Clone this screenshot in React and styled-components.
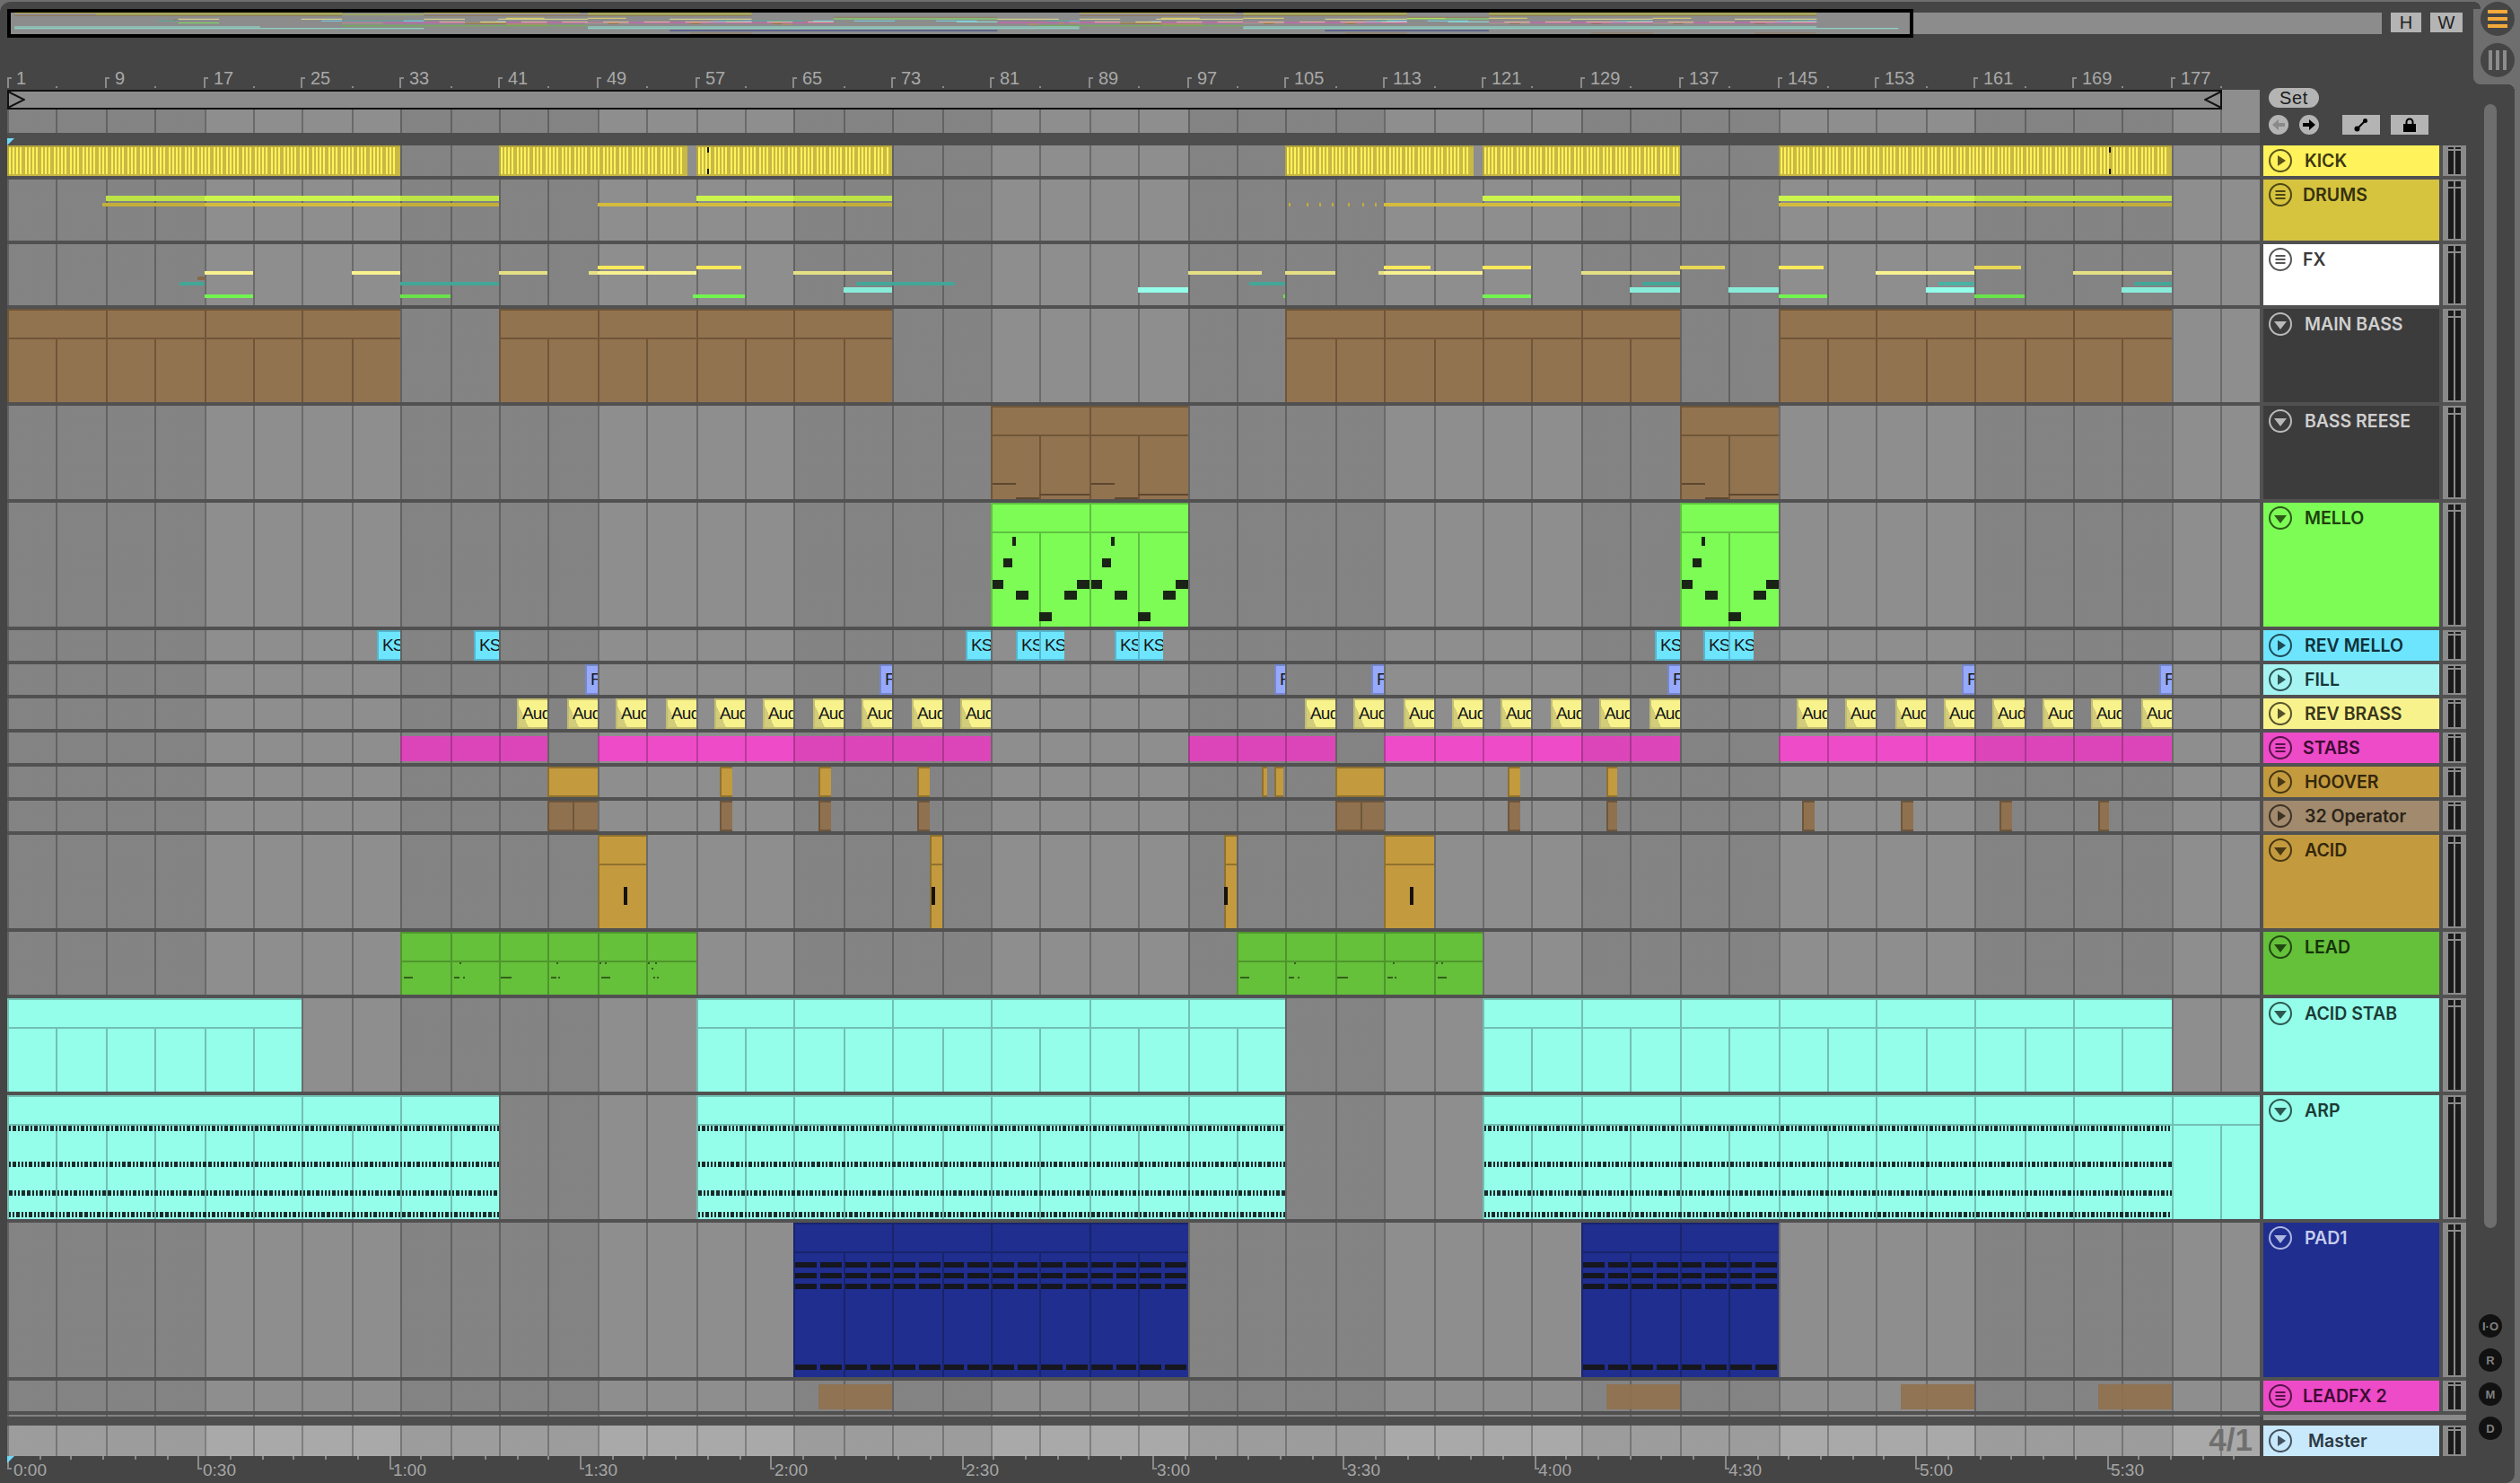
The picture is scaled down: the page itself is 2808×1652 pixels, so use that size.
import React from "react";
import styled, { createGlobalStyle } from "styled-components";

// timeline helpers: everything in the arrangement snaps to even pixels
const X = (bar) => Math.floor((9 + (bar - 1) * 13.7015) / 2) * 2;
const L = (bar) => X(bar) - 8;
const range = (from, to, step = 1) => {
  const out = [];
  for (let v = from; v < to; v += step) out.push(v);
  return out;
};

const gridBackground = (base, line) => {
  const stops = range(1, 186, 4).flatMap((b) => {
    const p = L(b);
    return [`${base} ${p}px`, `${line} ${p}px`, `${line} ${p + 2}px`, `${base} ${p + 2}px`];
  });
  return `linear-gradient(to right, ${stops.join(",")})`;
};
const shadeBackground = () => {
  const stops = range(1, 186, 16).flatMap((b) => {
    const c = (b - 1) % 32 === 0 ? "rgba(0,0,0,.075)" : "transparent";
    return [`${c} ${L(b)}px`, `${c} ${L(b + 16)}px`];
  });
  return `linear-gradient(to right, ${stops.join(",")})`;
};
const LANE = gridBackground("#8e8e8e", "#6a6a6a");
const MASTER_LANE = gridBackground("#a9a9a9", "#7f7f7f");
const SHADE = shadeBackground();

const rect = (x, y, w, h) => `M${x} ${y}h${w}v${h}h${-w}z`;

// KICK stripes
const kickStripes = (from, to) =>
  range(0, Math.floor((L(to) - L(from)) / 4.57))
    .map((i) => rect(L(from) + 2 + Math.floor((i * 4.57) / 2) * 2, 2, 2, 30))
    .join("");

const ARP_WIDTHS = [2, 4, 2, 2, 4, 2, 4, 2, 2, 2, 4, 2, 2, 4, 4, 2, 2, 4, 2];
const dashes = (from, to, y, seed) => {
  let x = L(from) + 2;
  const end = L(to);
  let i = seed;
  let d = "";
  while (x < end) {
    const w = Math.min(ARP_WIDTHS[i % ARP_WIDTHS.length], end - x);
    d += rect(x, y, w, 6);
    x += w + 2;
    i += 1;
  }
  return d;
};
const arpNotes = (from, to) =>
  [34, 74, 106, 130].map((y, i) => dashes(from, to, y, i * 5)).join("");

const padNotes = (from, to) =>
  range(from, to, 2)
    .flatMap((b) => [44, 56, 68, 158].map((y) => rect(L(b) + 2, y, L(b + 2) - L(b) - 4, 6)))
    .join("");

const MELLO_SHAPE = [
  [24, 38, 4], [14, 62, 10], [2, 86, 12], [28, 98, 14],
  [96, 86, 14], [82, 98, 14], [54, 122, 14],
];
const melloNotes = (from) =>
  MELLO_SHAPE.map(([x, y, w]) => rect(L(from) + x, y, w, 10)).join("");

const reeseNotes = (from) =>
  [[2, 86, 26], [28, 102, 26], [54, 98, 56]].map(([x, y, w]) => rect(L(from) + x, y, w, 2)).join("");

const LEAD_SHAPES = [
  [[4, 50, 10]],
  [[4, 50, 6], [14, 50, 2], [10, 34, 2]],
  [[2, 50, 12]],
  [[4, 50, 6], [12, 50, 2], [10, 34, 2]],
  [[4, 50, 10], [2, 34, 2], [8, 34, 2]],
  [[2, 34, 2], [10, 34, 2], [6, 40, 2], [8, 50, 2], [12, 50, 2]],
];
const leadNotes = (from, count) =>
  range(0, count)
    .flatMap((i) => LEAD_SHAPES[i].map(([x, y, w]) => rect(L(from + i * 4) + x, y, w, 2)))
    .join("");

const brass = (start, count) => range(0, count).map((k) => [start + 4 * k, start + 4 * k + 2.5]);

const FX_COLORS = { top: "#fbe95c", pale: "#f8f290", brown: "#92734f", teal: "#48b3a4", cyan: "#94feea", green: "#72f550" };
const FX_ROWS = { top: [24, 4], pale: [30, 4], brown: [36, 4], teal: [42, 4], cyan: [48, 6], green: [56, 4] };
const FX_NOTES = [
  ["pale", 17, 21], ["pale", 29, 33], ["pale", 41, 45], ["pale", 48.25, 57], ["pale", 65, 73], ["pale", 97, 103],
  ["pale", 105, 109], ["pale", 112.5, 121], ["pale", 129, 137], ["pale", 153, 161], ["pale", 169, 177],
  ["top", 49, 52.75], ["top", 57, 60.75], ["top", 113, 116.75], ["top", 121, 125], ["top", 137, 140.75], ["top", 145, 148.75], ["top", 161, 164.75],
  ["teal", 15, 17], ["teal", 33, 41], ["teal", 70, 78], ["teal", 102, 105], ["teal", 134, 137], ["teal", 158, 161], ["teal", 174, 177],
  ["cyan", 69, 73], ["cyan", 93, 97], ["cyan", 133, 137], ["cyan", 141, 145], ["cyan", 157, 161], ["cyan", 173, 177],
  ["green", 17, 21], ["green", 33, 37], ["green", 56.75, 61], ["green", 104.85, 105], ["green", 121, 125], ["green", 145, 149], ["green", 161, 165],
  ["brown", 16.5, 17],
];
const DRUM_NOTES = [
  ["#cbf54c", 18, 6, [[9, 41], [57, 73], [121, 137], [145, 177]]],
  ["#d4bc3c", 26, 4, [[8.75, 41], [49, 73], [113, 137], [145, 177]]],
];
const DRUM_DOTS = [105.2, 106.7, 107.7, 108.7, 110.1, 111.2, 112.2];

const KICK_CLIPS = [[1, 33], [41, 56.25], [57, 73], [105, 120.25], [121, 137], [145, 177]];

const TRACKS = [
  {
    name: "KICK", h: 34, color: "#fff25a", ink: "#3c3812", icon: "play",
    clipColor: "#c8b844", edge: "#b5a63e", frame: "tl",
    clips: KICK_CLIPS,
    notes: [
      { color: "#fff25a", d: KICK_CLIPS.map(([a, b]) => kickStripes(a, b)).join("") },
      { color: "#111", d: [58, 172].map((b) => rect(L(b), 2, 2, 6) + rect(L(b), 26, 2, 6)).join("") },
    ],
  },
  { name: "DRUMS", h: 68, color: "#d6c43f", ink: "#35300e", icon: "lines", clips: [], drums: true, shaded: true },
  { name: "FX", h: 68, color: "#ffffff", ink: "#3a3a3a", icon: "lines", clips: [], fx: true, shaded: true },
  {
    name: "MAIN BASS", h: 104, color: "#3c3c3c", ink: "#cfcfcf", icon: "down",
    clipColor: "#92734f", edge: "#6f5639", frame: "tl", header: true,
    clips: [[1, 33, 8], [41, 73, 8], [105, 137, 8], [145, 177, 8]],
  },
  {
    name: "BASS REESE", h: 104, color: "#3c3c3c", ink: "#cfcfcf", icon: "down",
    clipColor: "#92734f", edge: "#6f5639", frame: "tl", header: true,
    clips: [[81, 97, 8], [137, 145, 8]],
    notes: [{ color: "#5e4730", d: [81, 89, 137].map(reeseNotes).join("") }],
  },
  {
    name: "MELLO", h: 138, color: "#7cfc55", ink: "#20400f", icon: "down",
    clipColor: "#7cfc55", edge: "#5fc040", frame: "tl", header: true,
    clips: [[81, 97, 8], [137, 145, 8]],
    notes: [{ color: "#1a2416", d: [81, 89, 137].map(melloNotes).join("") }],
  },
  {
    name: "REV MELLO", h: 34, color: "#6ee5ff", ink: "#10303a", icon: "play",
    clipColor: "#6ee5ff", edge: "#55b5cc", frame: "tlb", label: "KS",
    clips: [[31, 33], [39, 41], [79, 81], [83, 85], [85, 87], [91, 93], [93, 95], [135, 137], [139, 141], [141, 143]],
  },
  {
    name: "FILL", h: 34, color: "#a6f4f2", ink: "#16383a", icon: "play",
    clipColor: "#97a9fb", edge: "#7688cc", frame: "tlb", label: "F",
    clips: [[48, 49], [72, 73], [104, 105], [112, 113], [136, 137], [160, 161], [176, 177]],
  },
  {
    name: "REV BRASS", h: 34, color: "#f8f28c", ink: "#38361a", icon: "play",
    clipColor: "linear-gradient(66deg, #d2cd7a 28%, #f8f28c 28%)", edge: "#c2bd70", frame: "tlb", label: "Audio",
    clips: [...brass(42.5, 10), ...brass(106.5, 8), ...brass(146.5, 8)],
  },
  {
    name: "STABS", h: 34, color: "#ee4bc8", ink: "#3d0a33", icon: "lines", shaded: true,
    clipColor: "#ee4bc8", edge: "#b93a9c", frame: "l", inset: true,
    clips: [[33, 45, 4], [49, 81, 4], [97, 109, 4], [113, 137, 4], [145, 177, 4]],
  },
  {
    name: "HOOVER", h: 34, color: "#c39a3e", ink: "#33270c", icon: "play",
    clipColor: "#c39a3e", edge: "#8f7130", frame: "tlb",
    clips: [[45, 49], [59, 60], [67, 68], [75, 76], [103, 103.5], [104, 104.75], [109, 113], [123, 124], [131, 132]],
  },
  {
    name: "32 Operator", h: 34, color: "#a18a6d", ink: "#2b2318", icon: "play",
    clipColor: "#8f7150", edge: "#6f5639", frame: "tlb",
    clips: [[45, 49, 2], [59, 60], [67, 68], [75, 76], [109, 113, 2], [123, 124], [131, 132], [147, 148], [155, 156], [163, 164], [171, 172]],
  },
  {
    name: "ACID", h: 104, color: "#c39a3e", ink: "#33270c", icon: "down",
    clipColor: "#c39a3e", edge: "#8f7130", frame: "tl", header: true,
    clips: [[49, 53], [76, 77], [100, 101], [113, 117]],
    notes: [{ color: "#15130c", d: [[49, 29], [76, 2], [100, 0], [113, 29]].map(([b, x]) => rect(L(b) + x, 58, 4, 20)).join("") }],
  },
  {
    name: "LEAD", h: 70, color: "#65c03a", ink: "#15330a", icon: "down",
    clipColor: "#65c03a", edge: "#4f962d", frame: "tl", header: true,
    clips: [[33, 57, 4], [101, 121, 4]],
    notes: [{ color: "#33601c", d: leadNotes(33, 6) + leadNotes(101, 5) }],
  },
  {
    name: "ACID STAB", h: 104, color: "#94feea", ink: "#1c3b36", icon: "down",
    clipColor: "#94feea", edge: "#72c0b2", frame: "tl", header: true,
    clips: [[1, 25, 24], [57, 105, 8], [121, 177, 8]],
  },
  {
    name: "ARP", h: 138, color: "#94feea", ink: "#1c3b36", icon: "down",
    clipColor: "#94feea", edge: "#72c0b2", frame: "tl", header: true,
    clips: [[1, 25, 24], [25, 33, 8], [33, 41, 8], [57, 105, 8], [121, 177, 8], [177, 185, 8]],
    notes: [{ color: "#1a2b29", d: arpNotes(1, 41) + arpNotes(57, 105) + arpNotes(121, 177) }],
  },
  {
    name: "PAD1", h: 172, color: "#1f2e8f", ink: "#c5ccee", icon: "down",
    clipColor: "#1f2e8f", edge: "#18246c", frame: "tl", header: true,
    clips: [[65, 97, 8], [129, 145, 8]],
    notes: [{ color: "#16161f", d: padNotes(65, 97) + padNotes(129, 145) }],
  },
  {
    name: "LEADFX 2", h: 34, color: "#ee4bc8", ink: "#3d0a33", icon: "lines",
    clipColor: "rgba(144,113,78,.9)", edge: "#8f7150", frame: "none", inset: true,
    clips: [[67, 73], [131, 137], [155, 161], [171, 177]],
  },
];

const GlobalStyle = createGlobalStyle`
  html, body { margin: 0; padding: 0; width: 2808px; height: 1652px; overflow: hidden; background: #6e6e6e; }
  #root { width: 2808px; height: 1652px; }
`;

const Page = styled.div`
  width: 2808px;
  height: 1652px;
  box-sizing: border-box;
  padding: 2px 6px 0 0;
  background: #6e6e6e;
  font-family: "Liberation Sans", Arial, sans-serif;
`;
const Panel = styled.div`
  position: relative;
  height: 100%;
  display: flex;
  background: #454545;
  border-radius: 12px 0 10px 0;
`;
const Main = styled.div`
  width: 2748px;
  display: flex;
  flex-direction: column;
  & > * { flex: none; }
`;

/* top right buttons sitting on the lighter window strip */
const Notch = styled.div`
  position: absolute;
  top: -2px;
  right: -6px;
  width: 52px;
  height: 94px;
  background: #6e6e6e;
  border-bottom-left-radius: 8px;
  &::before {
    content: "";
    position: absolute;
    left: 0;
    top: 2px;
    width: 8px;
    height: 8px;
    background: radial-gradient(circle at 0 100%, #454545 8px, #6e6e6e 8px);
  }
  &::after {
    content: "";
    position: absolute;
    left: 38px;
    top: 94px;
    width: 8px;
    height: 8px;
    background: radial-gradient(circle at 0 100%, transparent 8px, #6e6e6e 8px);
  }
`;
const RoundButton = styled.div`
  position: absolute;
  left: 8px;
  top: ${(p) => p.$top}px;
  width: 38px;
  height: 38px;
  border-radius: 50%;
  background: #454545;
  display: flex;
  align-items: center;
  justify-content: center;
`;

const Rail = styled.div`
  width: 54px;
  display: flex;
  flex-direction: column;
  align-items: center;
  padding-top: 114px;
`;
const ScrollTrack = styled.div`
  flex: none;
  width: 14px;
  height: 1252px;
  border-radius: 7px;
  background: #6e6e6e;
  margin-bottom: 96px;
`;
const RailButtons = styled.div`
  display: flex;
  flex-direction: column;
  gap: 12px;
`;
const RailButton = styled.div`
  width: 26px;
  height: 26px;
  border-radius: 50%;
  background: #111;
  color: #808080;
  font-size: 13px;
  font-weight: 700;
  display: flex;
  align-items: center;
  justify-content: center;
`;

/* overview */
const OverviewBar = styled.div`
  display: flex;
  gap: 10px;
  margin: 8px 0 0 8px;
  height: 32px;
`;
const Overview = styled.div`
  position: relative;
  width: 2646px;
  height: 24px;
  margin-top: 4px;
  background: #8c8c8c;
`;
const OverviewFrame = styled.div`
  position: absolute;
  left: 0;
  top: -4px;
  width: 2116px;
  height: 24px;
  border: 4px solid #000;
  svg { display: block; }
`;
const SquareButton = styled.div`
  width: ${(p) => p.$w}px;
  height: 22px;
  margin-top: 4px;
  background: #b4b4b4;
  color: #1e1e1e;
  font-size: 20px;
  display: flex;
  align-items: center;
  justify-content: center;
`;

/* bar ruler */
const BarRuler = styled.div`
  position: relative;
  height: 58px;
`;
const BarTick = styled.div.attrs((p) => ({ style: { left: p.$x } }))`
  position: absolute;
  bottom: 2px;
  width: 2px;
  height: ${(p) => (p.$major ? 12 : 2)}px;
  background: #8a8a8a;
  &::after {
    content: "";
    display: ${(p) => (p.$major ? "block" : "none")};
    position: absolute;
    left: 2px;
    top: 0;
    width: 3px;
    height: 2px;
    background: #8a8a8a;
  }
`;
const BarLabel = styled.div.attrs((p) => ({ style: { left: p.$x } }))`
  position: absolute;
  top: 37px;
  font-size: 20px;
  line-height: 17px;
  color: #a8a8a8;
`;

/* arrangement */
const Arrangement = styled.div`
  padding-left: 8px;
  display: flex;
  flex-direction: column;
  & > * { flex: none; }
`;
const HeaderRow = styled.div`
  display: grid;
  grid-template-columns: 2510px 226px;
  column-gap: 4px;
  height: 62px;
`;
const HeaderLanes = styled.div`
  background: #4e4e4e;
`;
const Controls = styled.div`
  margin-top: -2px;
  display: grid;
  grid-template-columns: 22px 22px 42px 42px;
  grid-template-rows: 22px 22px;
  column-gap: 12px;
  row-gap: 8px;
  padding-left: 6px;
  align-items: center;
`;
const SetPill = styled.div`
  grid-column: 1 / span 2;
  grid-row: 1;
  width: 56px;
  height: 22px;
  border-radius: 11px;
  background: #b4b4b4;
  color: #1a1a1a;
  font-size: 20px;
  letter-spacing: 0.6px;
  display: flex;
  align-items: center;
  justify-content: center;
`;
const ArrowButton = styled.div`
  width: 22px;
  height: 22px;
  border-radius: 50%;
  background: #b4b4b4;
  grid-row: 2;
  display: flex;
  align-items: center;
  justify-content: center;
`;
const IconButton = styled.div`
  width: 42px;
  height: 22px;
  background: #b4b4b4;
  grid-row: 2;
  display: flex;
  align-items: center;
  justify-content: center;
  margin-left: 14px;
`;
const Lane = styled.div`
  position: relative;
  height: ${(p) => p.$h}px;
  overflow: hidden;
  background: ${(p) => (p.$shaded ? LANE : p.$master ? `${SHADE}, ${MASTER_LANE}` : `${SHADE}, ${LANE}`)};
  &::after {
    content: "";
    display: ${(p) => (p.$shaded ? "block" : "none")};
    position: absolute;
    inset: 0;
    background: ${SHADE};
    pointer-events: none;
  }
`;
const LoopBrace = styled.div`
  position: absolute;
  left: 0;
  top: 0;
  width: ${L(181) + 2}px;
  height: 18px;
  border-top: 2px solid #111;
  border-bottom: 2px solid #111;
  background: #8c8c8c;
  z-index: 1;
  display: flex;
  justify-content: space-between;
  svg { display: block; }
`;
const CueMark = styled.div`
  position: absolute;
  left: 0;
  width: 8px;
  height: 8px;
  background: #6fd8f8;
  clip-path: polygon(0 0, 100% 0, 0 100%);
  z-index: 1;
`;
const CueBand = styled.div`
  position: relative;
  height: 14px;
  & > div { top: 6px; }
`;

const TrackList = styled.div`
  width: 2740px;
  display: flex;
  flex-direction: column;
  gap: 4px;
  background: #515151;
`;
const Row = styled.div`
  display: grid;
  grid-template-columns: 2510px 196px 26px;
  column-gap: 4px;
  height: ${(p) => p.$h}px;
`;
const Head = styled.div`
  background: ${(p) => p.$color};
  color: ${(p) => p.$ink};
  display: flex;
  align-items: flex-start;
  gap: ${(p) => p.$gap}px;
  padding: 4px 0 0 6px;
  svg { flex: none; display: block; }
`;
const HeadName = styled.div`
  font-family: Inter, "Liberation Sans", sans-serif;
  font-weight: 600;
  font-size: 19.5px;
  line-height: 26px;
  white-space: nowrap;
`;
const Meter = styled.div`
  background: #8a8a8a;
  display: flex;
  gap: 2px;
  padding: 2px 6px;
`;
const MeterColumn = styled.div`
  flex: 1;
  display: flex;
  flex-direction: column;
  gap: 2px;
`;
const MeterPeak = styled.div`
  height: ${(p) => (p.$tall ? 6 : 2)}px;
  background: #1a1a1a;
`;
const MeterBar = styled.div`
  flex: 1;
  background: #1a1a1a;
`;

const Clip = styled.div.attrs((p) => ({ style: { left: p.$l, width: p.$w } }))`
  position: absolute;
  top: ${(p) => (p.$inset ? 4 : 0)}px;
  bottom: ${(p) => (p.$inset ? 2 : 0)}px;
  background: ${(p) => p.$color};
  overflow: hidden;
  box-shadow: ${(p) =>
    ({
      tl: `inset 2px 0 0 ${p.$edge}, inset 0 2px 0 ${p.$edge}`,
      tlb: `inset 2px 0 0 ${p.$edge}, inset 0 2px 0 ${p.$edge}, inset 0 -2px 0 ${p.$edge}`,
      l: `inset 2px 0 0 ${p.$edge}`,
      none: "none",
    })[p.$frame]};
`;
const ClipLabel = styled.span`
  position: absolute;
  left: 6px;
  top: 0;
  font-size: 19px;
  line-height: 34px;
  letter-spacing: -0.8px;
  color: #16161a;
  white-space: nowrap;
`;
const HeaderLine = styled.div`
  position: absolute;
  left: 0;
  right: 0;
  top: 32px;
  height: 2px;
  background: ${(p) => p.$color};
`;
const ClipDivider = styled.div.attrs((p) => ({ style: { left: p.$x } }))`
  position: absolute;
  width: 2px;
  top: ${(p) => p.$top}px;
  height: ${(p) => p.$height};
  background: ${(p) => p.$color};
`;
const NoteLayer = styled.svg`
  position: absolute;
  left: 0;
  top: 0;
  display: block;
`;

const MasterGap = styled.div`
  height: 2px;
  width: 2510px;
  background: ${SHADE}, ${LANE};
`;
const MasterStrip = styled.div`
  height: 10px;
  width: 2510px;
  position: relative;
  background: #4e4e4e;
  &::after {
    content: "";
    position: absolute;
    left: 2514px;
    top: -2px;
    width: 226px;
    height: 6px;
    background: #8a8a8a;
  }
`;
const SignatureText = styled.div`
  position: absolute;
  right: 8px;
  top: -3px;
  font-size: 35px;
  line-height: 38px;
  font-weight: 700;
  color: #6f6f6f;
  z-index: 1;
`;

/* time ruler */
const TimeRuler = styled.div`
  position: relative;
  height: 30px;
`;
const TimeTick = styled.div.attrs((p) => ({ style: { left: p.$x } }))`
  position: absolute;
  top: 0;
  width: 2px;
  height: ${(p) => (p.$major ? 15 : 4)}px;
  background: #8a8a8a;
  &::after {
    content: "";
    display: ${(p) => (p.$major ? "block" : "none")};
    position: absolute;
    left: 2px;
    bottom: 0;
    width: 3px;
    height: 2px;
    background: #8a8a8a;
  }
`;
const TimeLabel = styled.div.attrs((p) => ({ style: { left: p.$x } }))`
  position: absolute;
  top: 6px;
  font-size: 19px;
  line-height: 20px;
  color: #a6a6a6;
`;

function TrackIcon({ kind }) {
  return (
    <svg width="26" height="26" viewBox="0 0 26 26">
      <circle cx="13" cy="13" r="12" fill="none" stroke="currentColor" strokeWidth="2" opacity="0.85" />
      {kind === "play" && <path d="M10 7 L19 13 L10 19 Z" fill="currentColor" opacity="0.85" />}
      {kind === "down" && <path d="M6 10 H20 L13 19 Z" fill="currentColor" opacity="0.85" />}
      {kind === "lines" && (
        <path d="M7.5 8h11v2h-11zM7.5 12h11v2h-11zM7.5 16h11v2h-11z" fill="currentColor" opacity="0.85" />
      )}
    </svg>
  );
}

function TrackMeter({ tall }) {
  return (
    <Meter>
      <MeterColumn>
        <MeterPeak $tall={tall} />
        <MeterBar />
      </MeterColumn>
      <MeterColumn>
        <MeterPeak $tall={tall} />
        <MeterBar />
      </MeterColumn>
    </Meter>
  );
}

function TrackClip({ track, clip }) {
  const [from, to, seg] = clip;
  const left = X(from);
  const dividers = track.header ? range(from + 4, to, 4) : seg ? range(from + seg, to, seg) : [];
  const headerDividers = track.header && seg ? range(from + seg, to, seg) : [];
  return (
    <Clip $l={left - 8} $w={X(to) - left} $color={track.clipColor} $edge={track.edge} $frame={track.frame} $inset={track.inset}>
      {track.header && <HeaderLine $color={track.edge} />}
      {headerDividers.map((b) => (
        <ClipDivider key={`h${b}`} $x={X(b) - left} $top={0} $height="32px" $color={track.edge} />
      ))}
      {dividers.map((b) => (
        <ClipDivider
          key={b}
          $x={X(b) - left}
          $top={track.header ? 34 : 0}
          $height={`${track.h}px`}
          $color={track.edge}
        />
      ))}
      {track.label && <ClipLabel>{track.label}</ClipLabel>}
    </Clip>
  );
}

function TrackNotes({ track }) {
  return (
    <NoteLayer width="2510" height={track.h} shapeRendering="crispEdges">
      {track.drums &&
        DRUM_NOTES.map(([color, y, h, spans]) =>
          spans.map(([a, b]) => <rect key={`${color}${a}`} x={L(a)} y={y} width={L(b) - L(a)} height={h} fill={color} />)
        )}
      {track.drums &&
        DRUM_DOTS.map((b) => <rect key={b} x={L(b)} y={26} width={2} height={4} fill="#d4bc3c" />)}
      {track.fx &&
        FX_NOTES.map(([kind, a, b]) => (
          <rect
            key={`${kind}${a}`}
            x={L(a)}
            y={FX_ROWS[kind][0]}
            width={Math.max(2, L(b) - L(a))}
            height={FX_ROWS[kind][1]}
            fill={FX_COLORS[kind]}
          />
        ))}
      {(track.notes || []).map((n) => (
        <path key={n.color} d={n.d} fill={n.color} />
      ))}
    </NoteLayer>
  );
}

function Track({ track }) {
  return (
    <Row $h={track.h}>
      <Lane $h={track.h} $shaded={track.shaded}>
        {track.clips.map((c) => (
          <TrackClip key={c[0]} track={track} clip={c} />
        ))}
        {(track.notes || track.drums || track.fx) && <TrackNotes track={track} />}
      </Lane>
      <Head $color={track.color} $ink={track.ink} $gap={track.icon === "lines" ? 12 : 14}>
        <TrackIcon kind={track.icon} />
        <HeadName>{track.name}</HeadName>
      </Head>
      <TrackMeter tall={track.h > 34} />
    </Row>
  );
}

// one thin line per clip in the overview
function OverviewMap() {
  const toX = (b) => 4 + (b - 1) * 11.41;
  let top = 0;
  const shapes = [];
  TRACKS.forEach((t) => {
    const y = (top / 1410) * 23;
    t.clips.forEach(([a, b]) => {
      const c = t.clipColor.startsWith("linear") ? "#f8f28c" : t.clipColor;
      shapes.push(<rect key={`${t.name}${a}`} x={toX(a)} y={y} width={toX(b) - toX(a)} height={1} fill={c} opacity="0.8" />);
    });
    if (t.fx) {
      FX_NOTES.forEach(([kind, a, b]) => {
        shapes.push(<rect key={`fx${kind}${a}`} x={toX(a)} y={y + FX_ROWS[kind][0] / 6} width={toX(b) - toX(a)} height={1} fill={FX_COLORS[kind]} opacity="0.8" />);
      });
    }
    if (t.drums) {
      DRUM_NOTES[0][3].forEach(([a, b]) => {
        shapes.push(<rect key={`dr${a}`} x={toX(a)} y={y + 1} width={toX(b) - toX(a)} height={1} fill="#a8b83c" />);
      });
    }
    top += t.h + 4;
  });
  return (
    <svg width="2116" height="24" viewBox="0 0 2116 24">
      {shapes}
    </svg>
  );
}

const BAR_LABELS = range(1, 178, 8);
const TIME_TICKS = range(0, 71);

export default function App() {
  return (
    <Page>
      <GlobalStyle />
      <Panel>
        <Main>
          <OverviewBar>
            <Overview>
              <OverviewFrame>
                <OverviewMap />
              </OverviewFrame>
            </Overview>
            <SquareButton $w={34}>H</SquareButton>
            <SquareButton $w={36}>W</SquareButton>
          </OverviewBar>

          <BarRuler>
            {BAR_LABELS.map((b) => (
              <React.Fragment key={b}>
                <BarTick $x={X(b) + (b === 1 ? 0 : -1)} $major />
                {b < 177 && <BarTick $x={X(b + 4)} />}
                <BarLabel $x={X(b) + 10}>{b}</BarLabel>
              </React.Fragment>
            ))}
            <BarTick $x={X(181)} />
          </BarRuler>

          <Arrangement>
            <HeaderRow>
              <HeaderLanes>
                <Lane $h={48}>
                  <LoopBrace>
                    <svg width="20" height="18" viewBox="0 0 20 18">
                      <path d="M1 0 V18 M1 0 L19 9 L1 18" fill="none" stroke="#111" strokeWidth="2" />
                    </svg>
                    <svg width="20" height="18" viewBox="0 0 20 18">
                      <path d="M19 0 V18 M19 0 L1 9 L19 18" fill="none" stroke="#111" strokeWidth="2" />
                    </svg>
                  </LoopBrace>
                </Lane>
                <CueBand>
                  <CueMark />
                </CueBand>
              </HeaderLanes>
              <Controls>
                <SetPill>Set</SetPill>
                <ArrowButton>
                  <svg width="16" height="14" viewBox="0 0 16 14">
                    <path d="M1 7 L8 1 V5 H15 V9 H8 V13 Z" fill="#8a8a8a" />
                  </svg>
                </ArrowButton>
                <ArrowButton>
                  <svg width="16" height="14" viewBox="0 0 16 14">
                    <path d="M15 7 L8 1 V5 H1 V9 H8 V13 Z" fill="#000" />
                  </svg>
                </ArrowButton>
                <IconButton>
                  <svg width="16" height="16" viewBox="0 0 16 16">
                    <path d="M4 12 L12 4" stroke="#000" strokeWidth="2" />
                    <circle cx="3.5" cy="12.5" r="3" fill="#000" />
                    <circle cx="12.5" cy="3.5" r="2.5" fill="#000" />
                  </svg>
                </IconButton>
                <IconButton>
                  <svg width="14" height="16" viewBox="0 0 14 16">
                    <path d="M3.5 7 V5 a3.5 3.5 0 0 1 7 0 V7" fill="none" stroke="#000" strokeWidth="2" />
                    <rect x="0" y="7" width="14" height="9" fill="#000" />
                  </svg>
                </IconButton>
              </Controls>
            </HeaderRow>

            <TrackList>
              {TRACKS.map((t) => (
                <Track key={t.name} track={t} />
              ))}
              <MasterGap />
            </TrackList>
            <MasterStrip />

            <Row $h={34}>
              <Lane $h={34} $master>
                <SignatureText>4/1</SignatureText>
              </Lane>
              <Head $color="#c8e8fc" $ink="#2c3a44" $gap={18}>
                <TrackIcon kind="play" />
                <HeadName>Master</HeadName>
              </Head>
              <TrackMeter />
            </Row>

            <TimeRuler>
              <CueMark />
              {TIME_TICKS.map((i) => {
                const x = Math.round((i * 35.44) / 2) * 2;
                return x < 2510 ? <TimeTick key={i} $x={x} $major={i % 6 === 0} /> : null;
              })}
              {range(0, 12).map((i) => {
                const secs = i * 30;
                const text = `${Math.floor(secs / 60)}:${String(secs % 60).padStart(2, "0")}`;
                return (
                  <TimeLabel key={i} $x={Math.round(i * 212.6) + (i === 0 ? 7 : 5)}>
                    {text}
                  </TimeLabel>
                );
              })}
            </TimeRuler>
          </Arrangement>
        </Main>

        <Rail>
          <ScrollTrack />
          <RailButtons>
            <RailButton>I·O</RailButton>
            <RailButton>R</RailButton>
            <RailButton>M</RailButton>
            <RailButton>D</RailButton>
          </RailButtons>
        </Rail>

        <Notch>
          <RoundButton $top={2}>
            <svg width="22" height="20" viewBox="0 0 22 20">
              <path d="M0 0h22v4H0zM0 8h22v4H0zM0 16h22v4H0z" fill="#f5a93a" />
            </svg>
          </RoundButton>
          <RoundButton $top={48}>
            <svg width="22" height="22" viewBox="0 0 22 22">
              <path d="M1 0h4v22H1zM9 0h4v22H9zM17 0h4v22h-4z" fill="#8c8c8c" />
            </svg>
          </RoundButton>
        </Notch>
      </Panel>
    </Page>
  );
}
